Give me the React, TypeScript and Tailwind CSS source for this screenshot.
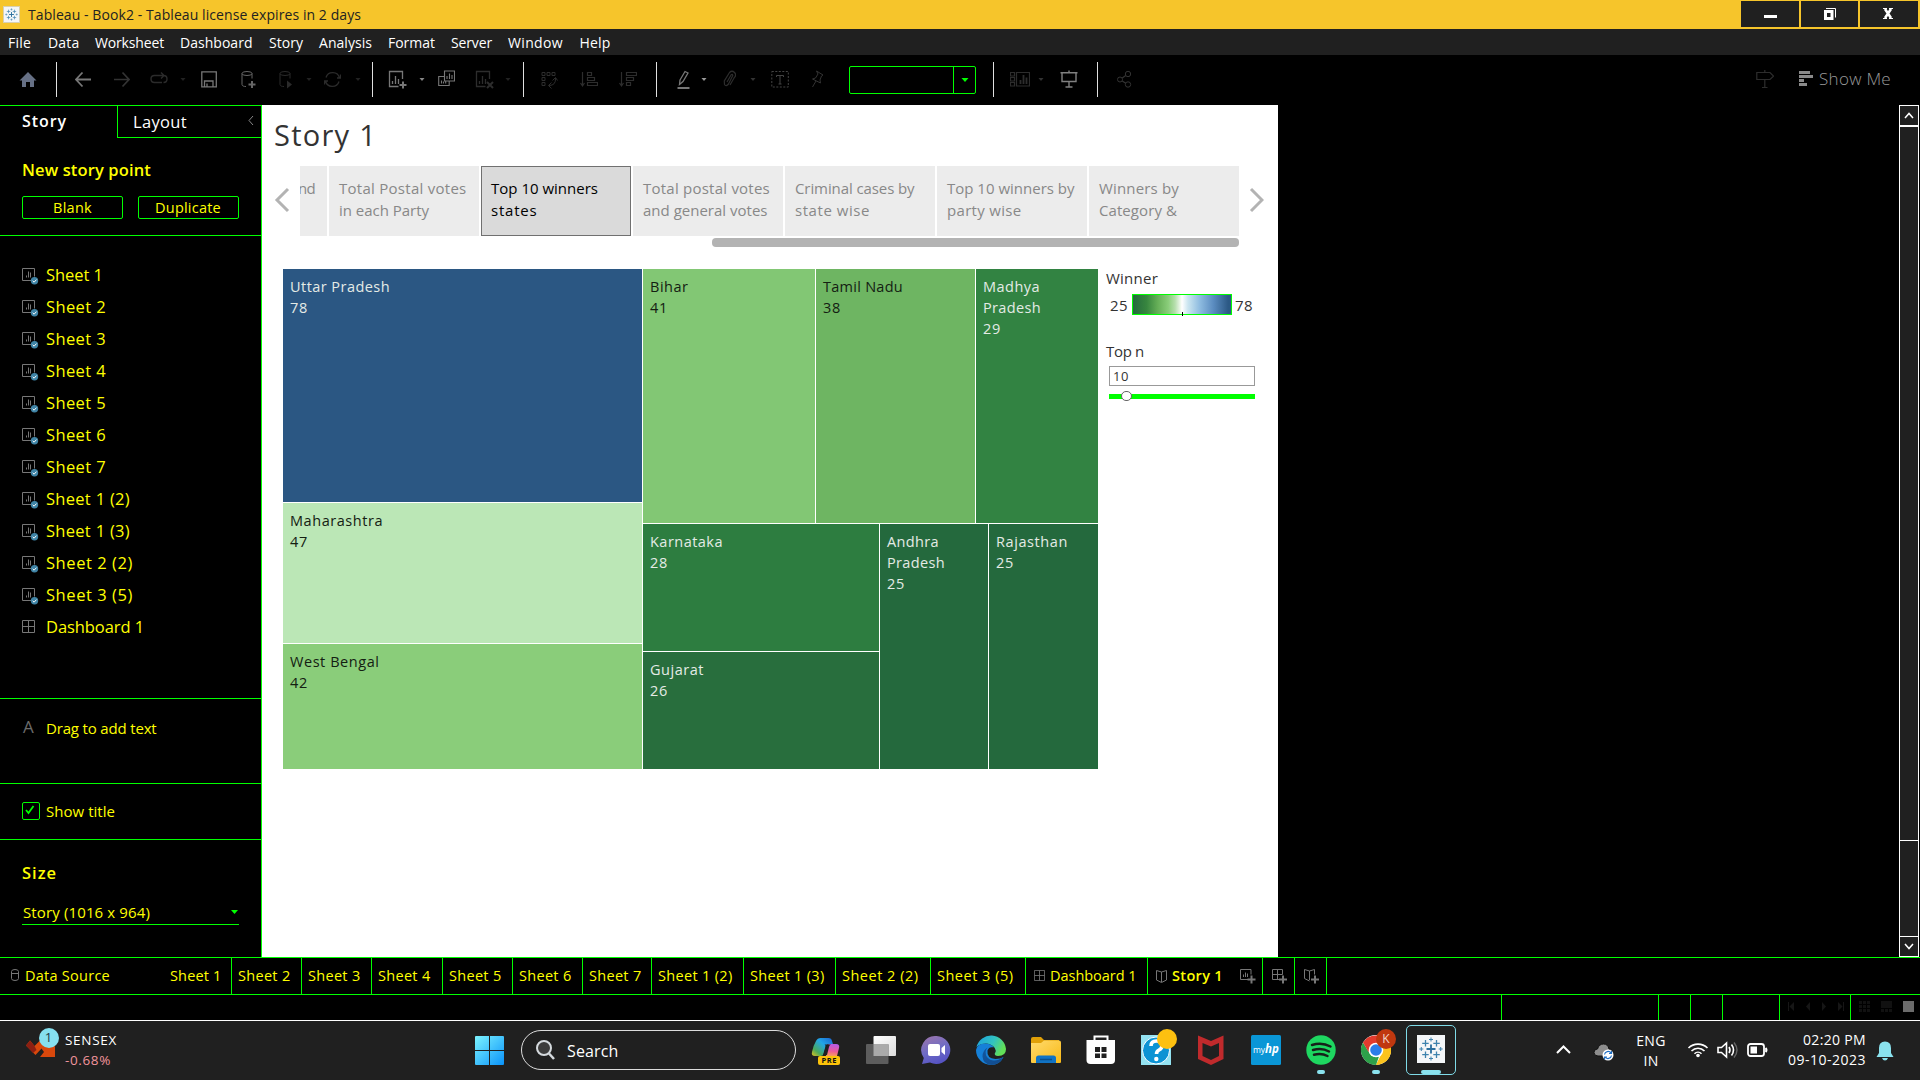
import { useLayoutEffect, useRef, useState } from "react";
import type { ReactNode } from "react";

/* Text set to an exact width: the tracking is measured once the text is laid out. */
function Label({ w, className = "", children }: { w: number; className?: string; children: string }) {
  const ref = useRef<HTMLSpanElement>(null);
  const [tracking, setTracking] = useState(0);
  useLayoutEffect(() => {
    if (ref.current) {
      const natural = ref.current.getBoundingClientRect().width;
      setTracking((w - natural) / children.length);
    }
  }, [w, children]);
  return (
    <span className={"block whitespace-pre " + className}>
      <span ref={ref} style={{ letterSpacing: tracking + "px" }}>{children}</span>
    </span>
  );
}

function Icon({ w, className = "", children, h = 20 }: { w: number; h?: number; className?: string; children: ReactNode }) {
  return (
    <svg width={w} height={h} viewBox={`0 0 ${w} ${h}`} fill="none" stroke="currentColor" className={"block shrink-0 " + className}>
      {children}
    </svg>
  );
}

function Caret({ className = "" }: { className?: string }) {
  return (
    <Icon w={6} className={className}>
      <path d="M0.5 8h5L3 11z" fill="currentColor" stroke="none" />
    </Icon>
  );
}

const Sep = ({ className = "" }: { className?: string }) => <div className={"h-[35px] w-px shrink-0 bg-[#e0e0e0] " + className} />;

function TableauMark({ size, className = "" }: { size: number; className?: string }) {
  return (
    <svg width={size} height={size} viewBox="0 0 28 28" className={className}>
      <rect width="28" height="28" fill="#f4f6f8" />
      <g stroke="#3d82ad" strokeWidth="1.3" fill="none">
        <path d="M14 9.5v9M9.5 14h9" stroke="#2b6f9e" strokeWidth="1.8" />
        <path d="M8.500 5v6.500M5.200 8.300h6.500M19.500 5v6.500M16.300 8.300h6.500M8.500 16.500v6.500M5.200 19.700h6.500M19.500 16.500v6.500M16.300 19.700h6.500" />
        <path d="M14 2.500v4M12 4.500h4M14 21.500v4M12 23.500h4M4.300 12v4M2.300 14h4M23.700 12v4M21.700 14h4" strokeWidth="1" />
      </g>
    </svg>
  );
}

function TitleBar() {
  return (
    <div className="flex h-[29px] bg-[#f6c52b] font-['Open_Sans',sans-serif] text-[#222]">
      <div className="flex items-center pl-[3px]">
        <TableauMark size={17} className="border border-[#d8d0b0]" />
        <Label w={333} className="ml-[8px] text-[14px]">Tableau - Book2 - Tableau license expires in 2 days</Label>
      </div>
      <div className="ml-auto flex gap-[2px] pt-px pr-[2px]">
        <div className="flex h-[26px] w-[58px] items-center justify-center bg-[#202020] pt-[5px]"><div className="h-[3px] w-[13px] bg-white" /></div>
        <div className="flex h-[26px] w-[57px] items-center justify-center bg-[#202020]">
          <Icon w={12} h={12} className="text-white"><path d="M2 0.5h9.500v9" /><path d="M1.500 3.500h6.500v7h-6.500z" strokeWidth="3" /></Icon>
        </div>
        <div className="flex h-[26px] w-[58px] items-center justify-center bg-[#202020] pr-[2px] pb-[2px]">
          <Icon w={12} h={11} className="text-white"><path d="M3 1l6 9M9 1l-6 9" strokeWidth="2.600" /><path d="M1 0.500h4M7 0.500h4M1 10.500h4M7 10.500h4" /></Icon>
        </div>
      </div>
    </div>
  );
}

const menus = [
  ["File", 23, 40], ["Data", 31.500, 47], ["Worksheet", 69, 85], ["Dashboard", 72.500, 89], ["Story", 34, 50],
  ["Analysis", 53, 69], ["Format", 47, 63], ["Server", 41, 57], ["Window", 55, 71.500], ["Help", 31, 47],
] as const;

function MenuBar() {
  return (
    <div className="flex h-[26px] items-center bg-[#202020] pt-px pl-[8px] font-['Open_Sans',sans-serif] text-[14px] text-white">
      {menus.map(([m, w, step]) => (
        <div key={m} className="shrink-0" style={{ width: step }}><Label w={w}>{m}</Label></div>
      ))}
    </div>
  );
}

const cylinder = <><ellipse cx="6" cy="3.500" rx="5" ry="2" /><path d="M1 3.500v11c0 1.500 2 2 4 2M11 3.500v5" /></>;
const chartBox = <path d="M14.500 9v-7.500h-13v15h9M4.500 14v-3M7.500 14v-8M10.500 14v-5" strokeWidth="1.300" />;

function Toolbar() {
  return (
    <div className="flex h-[50px] items-center bg-black pb-px text-[#222]">
      <Icon w={18} className="ml-[19px] text-[#667085]"><path d="M9 2L0.500 10.500H3V17h4v-5h4v5h4v-6.500h2.500z" fill="currentColor" stroke="none" /></Icon>
      <Sep className="ml-[19px]" />
      <Icon w={16} className="ml-[18px] text-[#777]"><path d="M16 9.500H1.500M7.500 2.500l-6.500 7 6.500 7" strokeWidth="1.800" /></Icon>
      <Icon w={16} className="ml-[23px] text-[#333]"><path d="M0 9.500h14.500M8.500 2.500l6.500 7-6.500 7" strokeWidth="1.700" /></Icon>
      <Icon w={18} className="ml-[20px] text-[#2b2b2b]"><path d="M12 12.500H4.500Q1 12.500 1 9t3.500-3.500H13.500Q17 5.500 17 9t-3.500 3.500M11 2.500l3 3-3 3" strokeWidth="1.400" /></Icon>
      <Caret className="ml-[12px]" />
      <Icon w={16} className="ml-[15px] text-[#777]"><path d="M0.800 1.800h14.500v15H0.800zM3.500 16.500v-5.500h8.500v5.500M6 16.500v-3" strokeWidth="1.300" /></Icon>
      <Icon w={15} className="ml-[24px] text-[#666]">{cylinder}<path d="M11 11v7M7.500 14.500h7" strokeWidth="2" /></Icon>
      <Icon w={13} className="ml-[23px] text-[#2a2a2a]">{cylinder}<path d="M8 10.500v8l5-4z" fill="currentColor" stroke="none" /></Icon>
      <Caret className="ml-[14px]" />
      <Icon w={17} className="ml-[12px] text-[#2b2b2b]"><path d="M2 7.500A7 7 0 0 1 15.500 8M15 11.500A7 7 0 0 1 1.500 11M13 8h3.500V4.500M4 11H0.500v3.500" strokeWidth="1.300" /></Icon>
      <Caret className="ml-[14px]" />
      <Sep className="ml-[11px]" />
      <Icon w={19} className="ml-[15px] text-[#777]">{chartBox}<path d="M15 11.500v7M11.500 15h7" strokeWidth="2" /></Icon>
      <Caret className="ml-[12px] text-[#888]" />
      <Icon w={17} className="ml-[13px] text-[#777]"><path d="M6.500 1h10v10h-10zM9 9V6M11.500 9V3.500M14 9V5M6 6.500H0.700v9h10.500v-4M3.500 13.500v-3M5.500 13.500v-2M7.700 13.500v-2" strokeWidth="1.100" /></Icon>
      <Icon w={19} className="ml-[20px] text-[#2d2d2d]">{chartBox}<path d="M12 12l6 6M18 12l-6 6" strokeWidth="2" /></Icon>
      <Caret className="ml-[11px]" />
      <Sep className="ml-[12px]" />
      <Icon w={17} className="ml-[17px] text-[#2d2d2d]"><path d="M1 2.500h3v3h-3zM6 2.500h3v3h-3zM11 2.500h3v3h-3zM1 7.500h3v3h-3zM1 12.500h3v3h-3zM14.500 8Q15 15.500 8 15.500M11.500 10.500l3-3 2 3M10.500 12.500l-3 3 3 3" /></Icon>
      <Icon w={18} className="ml-[22px] text-[#2d2d2d]"><path d="M2.500 2v13M0.500 13l2 3 2-3M7.500 2.500h4v3h-4zM7.500 7.500h7v3h-7zM7.500 12.500h10v3h-10z" strokeWidth="1.200" /></Icon>
      <Icon w={18} className="ml-[21px] text-[#2d2d2d]"><path d="M2.500 2v13M0.500 13l2 3 2-3M7.500 2.500h10v3h-10zM7.500 7.500h7v3h-7zM7.500 12.500h4v3h-4z" strokeWidth="1.200" /></Icon>
      <Sep className="ml-[19px]" />
      <Icon w={13} className="ml-[20px] text-[#777]"><path d="M3 10l5-8.500 3 1.500-5 8.500-3.500 3z" strokeWidth="1.300" /><path d="M0.500 18h12" strokeWidth="2" /></Icon>
      <Caret className="ml-[11px] text-[#999]" />
      <Icon w={13} className="ml-[16px] text-[#2d2d2d]"><path d="M4 12l4-7q1.500-1.500 1.800 0.500L5.500 14Q3 17 1.500 14.500L1.300 11 6.500 2.500Q9 0 11.500 2.500T11 8l-4 7" strokeWidth="1.200" /></Icon>
      <Caret className="ml-[14px] text-[#333]" />
      <Icon w={18} className="ml-[15px] text-[#444]"><path d="M0.800 1.500h16.500v15.500H0.800z" strokeDasharray="2 1.500" /><path d="M5.500 7V5.500h7V7M9 5.500v8.500M7.500 14h3" /></Icon>
      <Icon w={13} className="ml-[22px] text-[#333]"><path d="M5.500 1l6.500 4-1.500 1L9 10l0.500 3-8-4 3-1L7 4zM5 11l-3.500 6" /></Icon>
      <div className="mt-px ml-[25px] flex h-[28px] w-[127px] shrink-0 rounded-[2px] border border-[#0f0] text-[#0f0]">
        <div className="ml-auto flex w-[22px] items-center justify-center border-l border-[#0f0]">
          <Icon w={8} h={4}><path d="M0.500 0h7L4 4z" fill="currentColor" stroke="none" /></Icon>
        </div>
      </div>
      <Sep className="ml-[17px]" />
      <Icon w={20} className="ml-[16px] text-[#2d2d2d]"><path d="M0.500 2.500h4v3.500h-4zM0.500 7.500h4v3.500h-4zM0.500 12.500h4v3.500h-4zM6.500 2.500h13v13.500h-13z" strokeWidth="1.200" /><path d="M10.500 14v-4M13.500 14V5M16.500 14V7.500" strokeWidth="1.800" /></Icon>
      <Caret className="ml-[8px] text-[#333]" />
      <Icon w={18} className="ml-[16px] text-[#808080]"><path d="M0.500 2.700h17M9 0.500v2M2 3v8.500h14V3M9 11.500v5.500M5.500 17h7" strokeWidth="1.400" /></Icon>
      <Sep className="ml-[19px]" />
      <Icon w={15} className="ml-[19px] text-[#333]"><circle cx="11" cy="4" r="2.700" /><circle cx="3" cy="9.500" r="2.500" /><circle cx="11" cy="14.500" r="2.700" /><path d="M5.200 8l3.600-2.500M5.200 11l3.600 2.300" strokeWidth="1.200" /></Icon>
      <Icon w={18} className="ml-auto text-[#2d2d2d]"><path d="M0.800 2.500H14l3.500 3.700L14 9.500H0.800zM8.800 0v2.500M8.800 9.500v8M6 17.500h5.500" strokeWidth="1.200" /></Icon>
      <Icon w={14} className="ml-[25px] text-[#8a8a8a]"><path d="M0 2.500h11M0 6.500h14M0 10.500h5M0 14.500h8" strokeWidth="3" /></Icon>
      <div className="ml-[6px] w-[101px] pb-px font-['Open_Sans',sans-serif] text-[17px] font-[350] text-[#999]"><Label w={72}>Show Me</Label></div>
    </div>
  );
}

function SheetIcon() {
  return (
    <Icon w={17} h={17} className="text-[#777]">
      <path d="M9 12.500H0.500V0.500h12v8M4.500 9.500v-2M6.500 9.500V3.500M8.500 9.500V4.500" />
      <circle cx="12.500" cy="12.800" r="3.700" fill="#3f84a6" stroke="none" />
      <path d="M10.700 12.800l1.400 1.400 2.400-2.600" stroke="#fff" />
    </Icon>
  );
}

const GridIcon = ({ size }: { size: number }) => (
  <svg width={size} height={size} viewBox="0 0 13 13" fill="none" stroke="#777" className="block"><path d="M0.500 0.500h12v12h-12zM6.500 0.500v12M0.500 6.500h12" /></svg>
);

const sheets = [
  ["Sheet 1", 57], ["Sheet 2", 60], ["Sheet 3", 60], ["Sheet 4", 60], ["Sheet 5", 60], ["Sheet 6", 60], ["Sheet 7", 60],
  ["Sheet 1 (2)", 84], ["Sheet 1 (3)", 84], ["Sheet 2 (2)", 87], ["Sheet 3 (5)", 87], ["Dashboard 1", 98],
] as const;

function SidePanel() {
  return (
    <aside className="flex w-[262px] shrink-0 flex-col border-t border-r border-[#0f0] bg-black font-['Open_Sans',sans-serif] text-[#ff0]">
      <div className="flex h-[32px] shrink-0 text-white">
        <div className="w-[117px] pt-px pl-[22px] text-[16px] leading-[28px] font-semibold"><Label w={45}>Story</Label></div>
        <div className="flex flex-1 border-b border-l border-[#0f0] pl-[15px] text-[16.500px] leading-[31px]">
          <Label w={54}>Layout</Label>
          <Icon w={6} h={11} className="mt-[9px] mr-[7px] ml-auto text-[#888]"><path d="M5 1L1 5.500 5 10" /></Icon>
        </div>
      </div>
      <section className="h-[98px] shrink-0 border-b border-[#0f0] pl-[22px]">
        <h2 className="pt-[18px] text-[16.500px] leading-[28px] font-semibold"><Label w={129}>New story point</Label></h2>
        <div className="mt-[12px] flex gap-[15px] text-[14.500px] leading-[21px]">
          <div className="flex h-[23px] w-[101px] justify-center rounded-[2px] border border-[#0f0]"><Label w={39}>Blank</Label></div>
          <div className="flex h-[23px] w-[101px] justify-center rounded-[2px] border border-[#0f0] pr-px"><Label w={66}>Duplicate</Label></div>
        </div>
      </section>
      <section className="h-[463px] shrink-0 border-b border-[#0f0] pt-[23px] pl-[22px] text-[16.500px]">
        {sheets.map(([s, w]) => (
          <div key={s} className="flex h-[32px] items-center">
            <div className="h-[15px] w-[24px]">{s === "Dashboard 1" ? <GridIcon size={13} /> : <SheetIcon />}</div>
            <Label w={w}>{s}</Label>
          </div>
        ))}
      </section>
      <section className="flex h-[85px] shrink-0 border-b border-[#0f0] pt-[18px] pl-[22px] text-[15px] leading-[22px]">
        <div className="-mt-px w-[24px] pl-px text-[17px] text-[#6b6b6b]">A</div>
        <Label w={110.500}>Drag to add text</Label>
      </section>
      <section className="flex h-[56px] shrink-0 items-center border-b border-[#0f0] pl-[22px] text-[15px]">
        <div className="mr-[6px] mb-px flex size-[18px] items-center justify-center rounded-[2px] border border-[#0f0] pr-[2px] pb-[3px] text-[#0f0]">
          <Icon w={10} h={10}><path d="M1 5l2.500 3L8.500 1" strokeWidth="1.800" /></Icon>
        </div>
        <Label w={69}>Show title</Label>
      </section>
      <section className="px-[22px] pt-[19px]">
        <h2 className="text-[16.500px] leading-[28px] font-semibold"><Label w={35}>Size</Label></h2>
        <div className="mt-[10px] flex h-[28px] w-[217px] items-center border-b border-[#0f0] pt-[3px] pl-px text-[15px]">
          <Label w={127}>Story (1016 x 964)</Label>
          <Icon w={7} h={4} className="mr-px ml-auto text-[#0f0]"><path d="M0 0h7L3.500 4z" fill="currentColor" stroke="none" /></Icon>
        </div>
      </section>
    </aside>
  );
}

type Line = readonly [string, number];

const points: { lines: Line[]; active?: boolean }[] = [
  { lines: [["Total Postal votes", 127.500], ["in each Party", 90]] },
  { lines: [["Top 10 winners", 107], ["states", 46.500]], active: true },
  { lines: [["Total postal votes", 127], ["and general votes", 124.500]] },
  { lines: [["Criminal cases by", 119.500], ["state wise", 75]] },
  { lines: [["Top 10 winners by", 127.500], ["party wise", 74.500]] },
  { lines: [["Winners by", 80], ["Category &", 78]] },
];

function Tile({ bg, dark, lines, className = "" }: { bg: string; dark?: boolean; lines: Line[]; className?: string }) {
  return (
    <div className={`${bg} ${dark ? "text-[#142012]" : "text-[#e4ebe6]"} shrink-0 overflow-hidden pt-[7px] pl-[7px] leading-[21px] ${className}`}>
      {lines.map(([t, w]) => <Label key={t} w={w}>{t}</Label>)}
    </div>
  );
}

function Treemap() {
  return (
    <div className="flex h-[500px] w-[815px] shrink-0 gap-px text-[14.500px]">
      <div className="flex w-[359px] flex-col gap-px">
        <Tile bg="bg-[#2b5783]" lines={[["Uttar Pradesh", 100], ["78", 18]]} className="h-[233px]" />
        <Tile bg="bg-[#bbe7b6]" dark lines={[["Maharashtra", 93], ["47", 18]]} className="h-[140px]" />
        <Tile bg="bg-[#8acd7a]" dark lines={[["West Bengal", 89.500], ["42", 18]]} className="h-[125px]" />
      </div>
      <div className="flex w-[455px] flex-col gap-px">
        <div className="flex h-[254px] gap-px">
          <Tile bg="bg-[#82c774]" dark lines={[["Bihar", 38.500], ["41", 18]]} className="w-[172px]" />
          <Tile bg="bg-[#6eb562]" dark lines={[["Tamil Nadu", 80], ["38", 18]]} className="w-[159px]" />
          <Tile bg="bg-[#328342]" lines={[["Madhya", 57], ["Pradesh", 58], ["29", 18]]} className="w-[122px]" />
        </div>
        <div className="flex h-[245px] gap-px">
          <div className="flex w-[236px] flex-col gap-px">
            <Tile bg="bg-[#2d7d40]" lines={[["Karnataka", 73], ["28", 18]]} className="h-[127px]" />
            <Tile bg="bg-[#286e3d]" lines={[["Gujarat", 54], ["26", 18]]} className="h-[117px]" />
          </div>
          <Tile bg="bg-[#24693d]" lines={[["Andhra", 52], ["Pradesh", 58], ["25", 18]]} className="w-[108px]" />
          <Tile bg="bg-[#24693d]" lines={[["Rajasthan", 72], ["25", 18]]} className="w-[109px]" />
        </div>
      </div>
    </div>
  );
}

function Canvas() {
  return (
    <main className="w-[1016px] shrink-0 bg-white font-['Open_Sans',sans-serif]">
      <div className="pt-[9px] pl-[12px] text-[29px] leading-[42px] text-[#333]"><Label w={103}>Story 1</Label></div>
      <div className="mt-[10px] flex h-[81px] pl-[12px]">
        <Icon w={16} h={26} className="mt-[21px] text-[#b3b3b3]"><path d="M14 2L3 13l11 11" strokeWidth="3" /></Icon>
        <div className="ml-[10px] w-[939px]">
          <div className="flex h-[70px] gap-[2px] text-[15px] leading-[22px] text-[#888]">
            <div className="flex w-[27px] justify-end overflow-hidden bg-[#ececec] pt-[11px] pr-[12px]"><Label w={17}>nd</Label></div>
            {points.map((p) => (
              <div key={p.lines[0][0]} className={"w-[150px] " + (p.active ? "border border-[#707070] bg-[#dadada] px-[9px] pt-[10px] text-black" : "bg-[#ececec] px-[10px] pt-[11px]")}>
                {p.lines.map(([t, w]) => <Label key={t} w={w}>{t}</Label>)}
              </div>
            ))}
          </div>
          <div className="mt-[2px] ml-[412px] h-[9px] rounded-[4px] bg-[#b3b3b3]" />
        </div>
        <Icon w={16} h={26} className="mt-[21px] ml-[9px] text-[#b3b3b3]"><path d="M3 2l11 11L3 24" strokeWidth="3" /></Icon>
      </div>
      <div className="mt-[22px] flex pl-[21px]">
        <Treemap />
        <div className="w-[160px] pl-[8px] text-[15px] leading-[20px] text-[#333]">
          <div className="-mt-px font-medium"><Label w={52}>Winner</Label></div>
          <div className="mt-[6px] flex items-center pl-[4px] text-[15px]">
            <Label w={18} className="w-[22px]">25</Label>
            <div className="flex h-[21px] w-[100px] items-end justify-center border border-[#0f0] bg-[linear-gradient(90deg,#24693d_0%,#38863f_14%,#65ae57_25%,#8acd7a_36%,#b7dfae_43%,#ffffff_50%,#cce6f0_56%,#8fbce0_68%,#5b8cc0_82%,#2c5985_97%)]">
              <div className="h-[4px] w-px translate-y-[2px] bg-black" />
            </div>
            <Label w={18} className="ml-[3px]">78</Label>
          </div>
          <div className="mt-[26px] font-medium"><Label w={38}>Top n</Label></div>
          <div className="mt-[5px] ml-[3px] h-[20px] w-[146px] border border-[#999] pl-[3px] text-[13px] leading-[19px]"><Label w={16}>10</Label></div>
          <div className="mt-[8px] ml-[3px] flex h-[5px] w-[146px] items-center bg-[#0f0] pl-[12px]">
            <div className="-mt-px h-[10px] w-[11px] rounded-full border border-[#666] bg-white" />
          </div>
        </div>
      </div>
    </main>
  );
}

function ScrollBar() {
  return (
    <div className="mr-px ml-auto flex w-[20px] flex-col border-x border-t border-white bg-[#202020] text-white">
      <div className="flex h-[19px] items-center justify-center"><Icon w={10} h={7}><path d="M1 6l4-4.500L9 6" strokeWidth="1.500" /></Icon></div>
      <div className="h-[2px] bg-white" />
      <div className="h-[713px]" />
      <div className="h-px bg-white" />
      <div className="h-[95px]" />
      <div className="flex flex-1 items-center justify-center border-t border-white"><Icon w={10} h={7}><path d="M1 1l4 4.500L9 1" strokeWidth="1.500" /></Icon></div>
      <div className="h-px bg-white" />
    </div>
  );
}

const BookIcon = () => <Icon w={11} h={13} className="text-[#777]"><path d="M0.500 0.500v9.500l5 2.500 5-2.500V0.500L5.500 2zM5.500 2v10" /></Icon>;

const sheetTabs = [
  ["Sheet 2", 52.500, 70], ["Sheet 3", 52.500, 70], ["Sheet 4", 52.500, 71], ["Sheet 5", 52.500, 70], ["Sheet 6", 52.500, 70], ["Sheet 7", 52.500, 69],
  ["Sheet 1 (2)", 74.500, 92], ["Sheet 1 (3)", 74.500, 92], ["Sheet 2 (2)", 76.500, 95], ["Sheet 3 (5)", 76.500, 95],
] as const;

function TabStrip() {
  return (
    <div className="flex h-[38px] shrink-0 items-stretch border-y border-[#0f0] bg-black font-['Open_Sans',sans-serif] text-[14.500px] leading-[36px] text-[#ff0] *:shrink-0 *:border-r *:border-[#0f0]">
      <div className="flex w-[232px] pl-[11px]">
        <Icon w={8} h={12} className="mt-[11px] mr-[6px] text-[#777]"><path d="M0.500 2.500q0-2 3.500-2t3.500 2v7q0 2-3.500 2t-3.500-2zM0.500 4.500h7" /></Icon>
        <Label w={85}>Data Source</Label>
        <Label w={51.500} className="ml-[60px]">Sheet 1</Label>
      </div>
      {sheetTabs.map(([t, w, cell]) => (
        <div key={t} className="pl-[6px]" style={{ width: cell }}><Label w={w}>{t}</Label></div>
      ))}
      <div className="flex w-[122px] pl-[8px]"><div className="mt-[12px] mr-[5px]"><GridIcon size={11} /></div><Label w={86.500}>Dashboard 1</Label></div>
      <div className="flex w-[115px] pl-[8px]">
        <div className="mt-[12px] mr-[5px]"><BookIcon /></div>
        <div className="leading-[35px] font-semibold"><Label w={51}>Story 1</Label></div>
        <Icon w={16} h={16} className="mt-[10px] ml-[17px] text-[#777]"><path d="M8.500 11.500H0.500V1.500h10.500v5M3.500 9V6.500M5.500 9V4.500M7.500 9V5.500" /><path d="M11.500 7.500v8M7.500 11.500h8" strokeWidth="2" /></Icon>
      </div>
      <div className="w-[32px] pl-[9px]"><Icon w={16} h={16} className="mt-[10px] text-[#777]"><path d="M8.500 11.500H0.500V1.500h10v5M5.500 1.500v10M0.500 6.500h10" /><path d="M11 7.500v8M7 11.500h8" strokeWidth="2" /></Icon></div>
      <div className="w-[32px] pl-[9px]"><Icon w={16} h={16} className="mt-[10px] text-[#777]"><path d="M5.500 13l-5-2.500V1.500l5 1.500 5-1.500v5M5.500 3v9" /><path d="M11 7.500v8M7 11.500h8" strokeWidth="2" /></Icon></div>
    </div>
  );
}

function StatusBar() {
  return (
    <div className="flex h-[26px] shrink-0 border-b border-white bg-black text-[#161616] *:border-r *:border-[#0f0]">
      <div className="w-[1502px]" />
      <div className="w-[157px]" />
      <div className="w-[32px]" />
      <div className="w-[32px]" />
      <div className="w-[57px]" />
      <div className="flex w-[71px] items-center gap-[12px] pb-[2px] pl-[8px]">
        <Icon w={6} h={9}><path d="M0.500 0v9" /><path d="M6 0v9L1.500 4.500z" fill="currentColor" stroke="none" /></Icon>
        <Icon w={4} h={9}><path d="M4 0v9L0 4.500z" fill="currentColor" stroke="none" /></Icon>
        <Icon w={4} h={9}><path d="M0 0v9l4-4.500z" fill="currentColor" stroke="none" /></Icon>
        <Icon w={6} h={9}><path d="M5.500 0v9" /><path d="M0 0v9l4.500-4.500z" fill="currentColor" stroke="none" /></Icon>
      </div>
      <div className="flex flex-1 items-center gap-[11px] border-r-0! pb-[2px] pl-[8px] text-[#111]">
        <Icon w={11} h={11}><path d="M0 1.500h11M0 5.500h11M0 9.500h11" strokeWidth="3" strokeDasharray="3 1" /></Icon>
        <Icon w={11} h={11}><path d="M0 3.500h11" strokeWidth="7" /><path d="M0 9.500h11" strokeWidth="3" strokeDasharray="3 1" /></Icon>
        <div className="size-[11px] bg-[#6b6b6b]" />
      </div>
    </div>
  );
}

const S = ({ children, size = 30 }: { children: ReactNode; size?: number }) => (
  <svg width={size} height={size} viewBox="0 0 30 30" className="block">{children}</svg>
);

const taskIcons: { id: string; art: ReactNode; badge?: ReactNode; dot?: boolean }[] = [
  { id: "copilot", art: <S>
      <defs>
        <linearGradient id="cpA" x1="1" y1="0" x2="0" y2="1"><stop offset="0" stopColor="#1b5fd0" /><stop offset="0.400" stopColor="#22a6e6" /><stop offset="0.750" stopColor="#4aa95c" /><stop offset="1" stopColor="#e3c21c" /></linearGradient>
        <linearGradient id="cpB" x1="0.500" y1="0" x2="0.400" y2="1"><stop offset="0" stopColor="#b45be8" /><stop offset="0.600" stopColor="#ee5a9a" /><stop offset="1" stopColor="#f8a05a" /></linearGradient>
      </defs>
      <path d="M5 6q1.500-3 4.500-3h8q3 0 3.500 3l1 3h-4q-2.500 0-3.200 3l-2 6.500q-0.800 2.500-3 2.500H4q-4 0-3-4 1-6 4-11z" fill="url(#cpA)" />
      <path d="M17.500 9h7.500q4 0 3 4l-2 8H15z" fill="url(#cpB)" />
      <path d="M13 9.500q2-0.500 1.300 2.500L12 20h4l2-8q0.500-2.500 2-2.500h-5z" fill="#202020" />
      <rect x="7" y="21" width="22" height="9" rx="2" fill="#fdc30a" />
      <text x="18.300" y="28.300" fontSize="7.500" fontWeight="700" textAnchor="middle" fontFamily="Open Sans, sans-serif" fill="#111" letterSpacing="0.600">PRE</text>
    </S> },
  { id: "taskview", art: <S>
      <defs><linearGradient id="tv" x1="0" y1="0" x2="1" y2="1"><stop offset="0" stopColor="#fff" /><stop offset="1" stopColor="#dcdcdc" /></linearGradient></defs>
      <rect x="7.500" y="1" width="22.500" height="20" rx="1" fill="url(#tv)" /><rect x="0" y="9" width="22.500" height="20" rx="1" fill="#5d5d5d" /><rect x="7.500" y="9" width="15" height="12" fill="#aaa" />
    </S> },
  { id: "chat", art: <S>
      <defs><linearGradient id="ch" x1="0.200" y1="0" x2="0.600" y2="1"><stop offset="0" stopColor="#9a74ad" /><stop offset="0.500" stopColor="#6f6cc4" /><stop offset="1" stopColor="#5552c4" /></linearGradient></defs>
      <path d="M15.500 1A14 14 0 1 1 9 27.500L1 29l1.800-6A14 14 0 0 1 15.500 1z" fill="url(#ch)" /><rect x="7" y="9" width="12" height="12" rx="2" fill="#fff" /><path d="M20.500 13l3.500-3v10l-3.500-3z" fill="#fff" />
    </S> },
  { id: "edge", art: <S>
      <defs>
        <linearGradient id="edA" x1="0" y1="0" x2="1" y2="0.400"><stop offset="0" stopColor="#1a9fe0" /><stop offset="0.600" stopColor="#32c3c0" /><stop offset="1" stopColor="#62df58" /></linearGradient>
        <linearGradient id="edB" x1="0" y1="0" x2="1" y2="1"><stop offset="0" stopColor="#1257a0" /><stop offset="1" stopColor="#114a8b" /></linearGradient>
      </defs>
      <path d="M0.500 12A15 15 0 0 1 30 14q0 7-8 7-4 0-3.500-2.500Q21 16 18 12 13 7 6 9q-4 1-5.500 3z" fill="url(#edA)" />
      <path d="M0 15Q1 8.500 9 8.500q6 0 9 4-5-1.500-6.500 3-1 8 8 8.500 5 0 8-2-4 8-12.500 8A15 15 0 0 1 0 15z" fill="#1680d8" />
      <path d="M11.500 12.500Q8 17 11 22q6 7 16.500 0-4 8-12.500 8-8-1-8.500-8.500 0-6 5-9z" fill="url(#edB)" />
      <path d="M18 12.500q2.500 3.500 0.500 6 0 1.500 1.500 2.500-6 0-6-5 0-3.500 4-3.500z" fill="#202020" />
    </S> },
  { id: "files", art: <S>
      <defs><linearGradient id="fo" x1="0" y1="0" x2="1" y2="1"><stop offset="0" stopColor="#ffdb6e" /><stop offset="1" stopColor="#f9b916" /></linearGradient></defs>
      <path d="M0 4q0-2 2-2h8l3 3h15v6H0z" fill="#e0a008" /><path d="M0 8h10l3-2.500h15q2 0 2 2V27q0 1-1 1H1q-1 0-1-1z" fill="url(#fo)" /><path d="M5 28v-5q0-2.500 2.500-2.500h15q2.500 0 2.500 2.500v5z" fill="#1173c4" /><path d="M9 24.500h12" stroke="#0b4f8c" strokeWidth="1.500" />
    </S> },
  { id: "store", art: <S>
      <path d="M8.500 6V1.500h13V6" fill="none" stroke="#fff" strokeWidth="2" /><path d="M0.500 5h28.500v20q0 4-4 4h-20.500q-4 0-4-4z" fill="#fff" /><path d="M9 12h5v5H9zM15.500 12h5v5h-5zM9 18.500h5v4.500H9zM15.500 18.500h5v4.500h-5z" fill="#202020" />
    </S> },
  { id: "help", art: <S>
      <rect width="30" height="30" fill="#93e2f1" /><circle cx="15" cy="15.500" r="13.500" fill="#0c93d4" stroke="#fff" />
      <path d="M10 11q0-5 5.500-5t5.500 4.500q0 3-3 4.500-2.500 1.300-2.500 4" stroke="#fff" strokeWidth="3.600" fill="none" /><circle cx="15.300" cy="24" r="2.200" fill="#fff" />
    </S>, badge: <div className="absolute top-[8px] left-[29px] size-[20px] rounded-full bg-[#fdc010]" /> },
  { id: "shield", art: <S><path d="M2 0.500l13 5.500 12.500-5.500V24L15 30 2 24zM6.500 8v13l8.500 4 8-4V8l-8 3.500z" fill="#c02a2c" fillRule="evenodd" /></S> },
  { id: "myhp", art: <S>
      <rect width="30" height="30" rx="1.500" fill="#0a96d6" />
      <text x="2" y="18" fontSize="8.500" fontFamily="Open Sans, sans-serif" fill="#fff">my</text><text x="14" y="18" fontSize="11.500" fontStyle="italic" fontWeight="700" fontFamily="Open Sans, sans-serif" fill="#fff">hp</text>
    </S> },
  { id: "music", dot: true, art: <S>
      <circle cx="15" cy="15" r="14.700" fill="#1ed760" /><path d="M6 10q10-3 18.500 1.500M7 15q9-2.500 16 1.500M8 19.700q7.500-2 13.500 1.300" stroke="#16211a" strokeWidth="2.500" fill="none" strokeLinecap="round" />
    </S> },
  { id: "chrome", dot: true, art: <S>
      <circle cx="15" cy="15" r="15" fill="#fff" /><path d="M15 8.500h13.500a15 15 0 0 1-3 17.500L15 30l6-12z" fill="#fcc31e" /><path d="M15 8.500H28.500A15 15 0 0 1 15 30l6-11z" fill="#fcc31e" /><path d="M2 7.500L9 19q3 4 9 2.500L15 30A15 15 0 0 1 2 7.500z" fill="#2da14a" /><path d="M2 7.500A15 15 0 0 1 28 8.500H15l-6 3.500-1.500 5z" fill="#e33b2e" /><circle cx="15" cy="15" r="7.300" fill="#fff" /><circle cx="15" cy="15" r="5.800" fill="#2b7de9" />
    </S>, badge: <div className="absolute top-[8px] left-[28px] flex size-[20px] items-center justify-center rounded-full bg-[#c0380f] text-[12px] text-[#f3d5cb]">K</div> },
];

function TaskBar() {
  return (
    <div className="flex h-[59px] shrink-0 bg-[#202020] font-['Open_Sans',sans-serif] text-white">
      <div className="flex w-[475px] pl-[26px]">
        <div className="relative mt-[14px] h-[32px] w-[39px]">
          <Icon w={30} h={24}><path d="M0 10.500l4-5 4.500 5.500 6-6H27l2 7v10H14l4-5-2.500-3.500L9.500 20z" fill="#d9480c" stroke="none" /><path d="M0 10.500l4-5 4.500 5.500 2 4-3.500 3z" fill="#8c1f12" stroke="none" /></Icon>
          <div className="absolute -top-[7px] left-[12.500px] flex size-[20px] items-center justify-center rounded-full bg-[#86e0ef] text-[13px] text-[#1c3a44]">1</div>
        </div>
        <div className="pt-[9px] text-[13.500px] leading-[20px]">
          <Label w={52}>SENSEX</Label>
          <Label w={46} className="text-[#f1949c]">-0.68%</Label>
        </div>
      </div>
      <svg width="29" height="29" viewBox="0 0 29 29" className="mt-[15px] block">
        <defs><linearGradient id="win" x1="0" y1="0" x2="1" y2="1"><stop offset="0" stopColor="#7cf3fe" /><stop offset="1" stopColor="#0a93fa" /></linearGradient></defs>
        <path d="M1 0h13v14H0V1q0-1 1-1zM15 0h13q1 0 1 1v13H15zM0 15h14v14H1q-1 0-1-1zM15 15h14v13q0 1-1 1H15z" fill="url(#win)" />
      </svg>
      <div className="mt-[9px] ml-[17px] flex h-[40px] w-[275px] items-center rounded-full border border-[#ddd] pl-[14px]">
        <Icon w={19} h={20} className="text-[#d5dade]"><circle cx="8" cy="8" r="7" fill="#3c3c3c" strokeWidth="2" /><path d="M13 13.500l5 5.500" strokeWidth="2.500" /></Icon>
        <div className="ml-[12px] pt-px text-[16px]"><Label w={51.500}>Search</Label></div>
      </div>
      <div className="ml-[2px] flex">
        {taskIcons.map((t) => (
          <div key={t.id} className="relative flex w-[55px] shrink-0 flex-col items-center pt-[14px]">
            {t.art}
            {t.badge}
            {t.dot && <div className="mt-[5px] h-[4px] w-[8px] rounded-full bg-[#8ae2ee]" />}
          </div>
        ))}
        <div className="mt-[4px] ml-[3px] flex h-[50px] w-[50px] flex-col items-center rounded-[5px] border border-[#7fdbe8] pt-[9px]">
          <TableauMark size={28} />
          <div className="mt-[7px] h-[4px] w-[20px] rounded-full bg-[#8ae2ee]" />
        </div>
      </div>
      <div className="ml-auto flex w-[364px] shrink-0 text-[14px] leading-[20px]">
        <Icon w={15} h={9} className="mt-[24px]"><path d="M1 8l6.500-6.500L14 8" strokeWidth="2" /></Icon>
        <Icon w={22} h={20} className="mt-[21px] ml-[22px]"><path d="M5 14Q1 14 1 10.500T4.500 7Q6 2 10.500 2t5.500 5q4 0 4 4.500-2 2.500-5 2.500z" fill="#8d8d8d" stroke="#111" /><circle cx="15" cy="13" r="5.500" fill="#fff" stroke="none" /><path d="M11.500 12.500a3.600 3.600 0 0 1 6.500-1.500M18.500 13.500a3.600 3.600 0 0 1-6.500 1.500M18.500 9v2.500h-2.500M11.500 17.500V15H14" stroke="#1f6fc4" strokeWidth="1.200" /></Icon>
        <div className="ml-[21px] flex w-[30px] flex-col items-center pt-[10px]"><Label w={29.500}>ENG</Label><Label w={15}>IN</Label></div>
        <Icon w={22} h={17} className="mt-[20px] ml-[21px]"><path d="M1.500 7a13.500 13.500 0 0 1 19 0M4.500 10a9 9 0 0 1 13 0M7.500 12.700a5 5 0 0 1 7 0" strokeWidth="1.600" /><circle cx="11" cy="14.500" r="1.800" fill="#fff" stroke="none" /></Icon>
        <Icon w={22} h={18} className="mt-[20px] ml-[8px]"><path d="M1 6.500h3.500L9.500 2v14l-5-4.500H1zM12 6q2 3 0 6M14.500 3.500q4 5.500 0 11" strokeWidth="1.600" /><path d="M17 1.500q6 7.500 0 15" stroke="#666" strokeWidth="1.400" /></Icon>
        <Icon w={21} h={14} className="mt-[22px] ml-[8px]"><rect x="1" y="1" width="16" height="12" rx="2.500" strokeWidth="1.800" /><rect x="3.500" y="3.500" width="6.500" height="7" fill="#fff" stroke="none" /><path d="M18.500 5q2 2 0 4" strokeWidth="2" /></Icon>
        <div className="ml-[19px] flex w-[79px] flex-col items-end pt-[9px]"><Label w={63}>02:20 PM</Label><Label w={78}>09-10-2023</Label></div>
        <Icon w={18} h={20} className="mt-[20px] ml-[10px] text-[#8ae2ee]"><path d="M9 0.500q6 0 6 6.500v5l2.500 4h-17L3 12V7q0-6.500 6-6.500zM6 17h6q-1 2.500-3 2.500T6 17z" fill="currentColor" stroke="none" /></Icon>
      </div>
    </div>
  );
}

export default function App() {
  return (
    <div className="flex h-[1080px] w-[1920px] flex-col overflow-hidden bg-black">
      <TitleBar />
      <MenuBar />
      <Toolbar />
      <div className="flex h-[852px] shrink-0">
        <SidePanel />
        <Canvas />
        <ScrollBar />
      </div>
      <TabStrip />
      <StatusBar />
      <TaskBar />
    </div>
  );
}
